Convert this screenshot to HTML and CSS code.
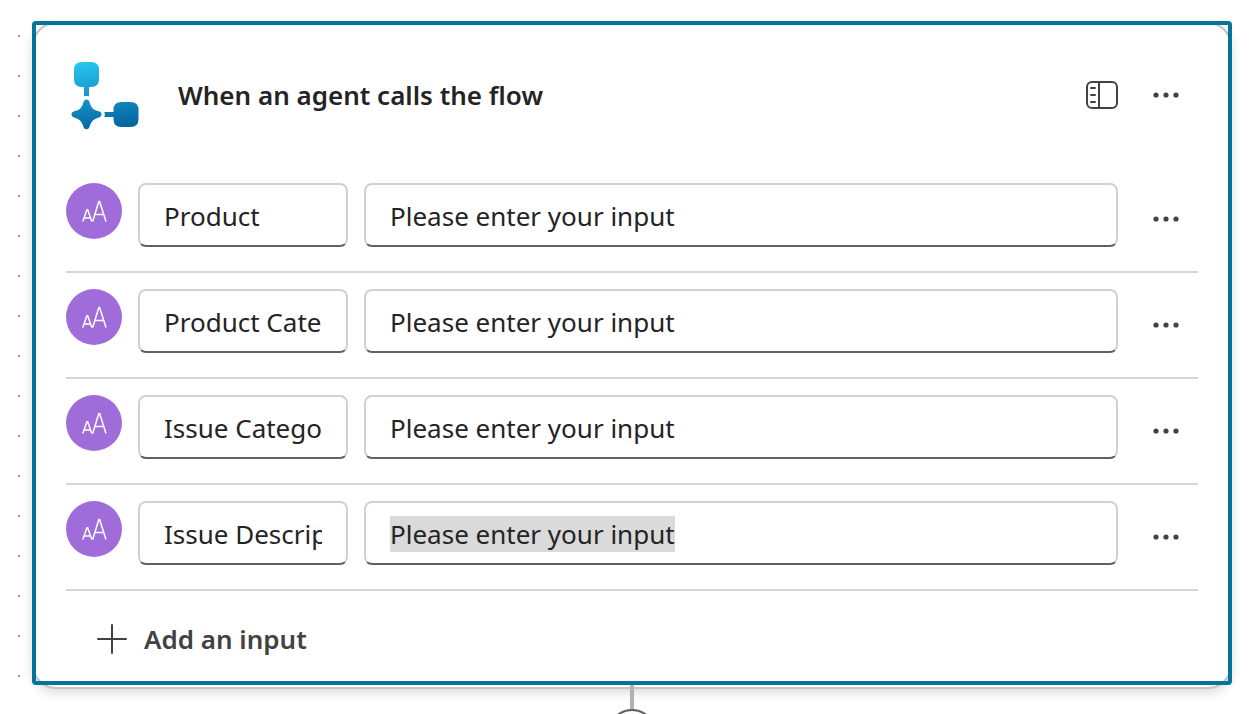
FILE: index.html
```html
<!DOCTYPE html>
<html lang="en">
<head>
<meta charset="utf-8">
<meta name="viewport" content="width=device-width, initial-scale=1">
<title>When an agent calls the flow</title>
<link rel="stylesheet" href="styles.css">
</head>
<body>
<svg class="sprite" aria-hidden="true">
  <symbol id="icon-text" viewBox="0 0 56 56">
    <path d="M26.700 38.500 32.800 18.500h.8L40 38.500M29 31.500h8.800M16.800 38.500 20.900 26.800h.8L25.800 38.500M18.200 35h6.400" fill="none" stroke="#fff" stroke-width="1.500" stroke-linejoin="round"/>
  </symbol>
  <symbol id="icon-more" viewBox="0 0 28 8">
    <circle cx="4" cy="4" r="2.600"/><circle cx="14" cy="4" r="2.600"/><circle cx="24" cy="4" r="2.600"/>
  </symbol>
</svg>
<main class="canvas">
  <section class="card">
    <header class="card-header">
      <svg class="flow-icon" viewBox="0 0 72 72" aria-hidden="true">
        <defs>
          <linearGradient id="flow" gradientUnits="userSpaceOnUse" x1="28" y1="2" x2="40" y2="70">
            <stop offset="0" stop-color="#27c3ee"/><stop offset="1" stop-color="#0364a0"/>
          </linearGradient>
        </defs>
        <g fill="url(#flow)">
          <path d="M12 3H21Q29 3 29 11V20Q29 28 21 28H19V37.300Q16.500 36.500 14 37.300V28H12Q4 28 4 20V11Q4 3 12 3Z"/>
          <path d="M16.500 40.500C18.300 40.500 19 41.800 19.600 43.500C21.500 49.500 23.500 51 28.800 52.300C30.500 52.900 31.500 53.700 31.500 55.300C31.500 57 30.500 57.900 28.800 58.400C23.500 60 21.500 62 19.600 67.500C19 69.300 18.300 70.300 16.500 70.300C14.700 70.300 14 69.300 13.400 67.500C11.500 62 9.500 60 4.200 58.400C2.500 57.900 1.500 57 1.500 55.300C1.500 53.700 2.500 52.900 4.200 52.300C9.500 51 11.500 49.500 13.400 43.500C14 41.800 14.700 40.500 16.500 40.500Z"/>
          <path d="M34.400 53H43.500V51Q43.500 43 51.500 43H60.500Q68.500 43 68.500 51V60Q68.500 68 60.500 68H51.500Q43.500 68 43.500 60V58H34.400Q35.200 55.500 34.400 53Z"/>
        </g>
      </svg>
      <h1 class="card-title">When an agent calls the flow</h1>
      <button class="icon-button" type="button" aria-label="Open panel">
        <svg class="panel-icon" viewBox="0 0 32 28" fill="none" stroke="currentColor" stroke-width="2" aria-hidden="true">
          <rect x="1" y="1" width="30" height="26" rx="5"/><path d="M13 1v26"/><path d="M5 7h4M5 14h4M5 21h4" stroke-linecap="round"/>
        </svg>
      </button>
      <button class="icon-button" type="button" aria-label="More actions"><svg class="more-icon" aria-hidden="true"><use href="#icon-more"/></svg></button>
    </header>
    <ul class="inputs">
      <li class="input-row">
        <svg class="type-badge" aria-hidden="true"><use href="#icon-text"/></svg>
        <input class="field" type="text" aria-label="Input 1 name" value="Product">
        <input class="field" type="text" aria-label="Input 1 description" value="Please enter your input">
        <button class="icon-button" type="button" aria-label="Input 1 menu"><svg class="more-icon" aria-hidden="true"><use href="#icon-more"/></svg></button>
      </li>
      <li class="input-row">
        <svg class="type-badge" aria-hidden="true"><use href="#icon-text"/></svg>
        <input class="field" type="text" aria-label="Input 2 name" value="Product Category">
        <input class="field" type="text" aria-label="Input 2 description" value="Please enter your input">
        <button class="icon-button" type="button" aria-label="Input 2 menu"><svg class="more-icon" aria-hidden="true"><use href="#icon-more"/></svg></button>
      </li>
      <li class="input-row">
        <svg class="type-badge" aria-hidden="true"><use href="#icon-text"/></svg>
        <input class="field" type="text" aria-label="Input 3 name" value="Issue Category">
        <input class="field" type="text" aria-label="Input 3 description" value="Please enter your input">
        <button class="icon-button" type="button" aria-label="Input 3 menu"><svg class="more-icon" aria-hidden="true"><use href="#icon-more"/></svg></button>
      </li>
      <li class="input-row">
        <svg class="type-badge" aria-hidden="true"><use href="#icon-text"/></svg>
        <input class="field" type="text" aria-label="Input 4 name" value="Issue Description">
        <input class="field" id="active-field" type="text" aria-label="Input 4 description" value="Please enter your input">
        <button class="icon-button" type="button" aria-label="Input 4 menu"><svg class="more-icon" aria-hidden="true"><use href="#icon-more"/></svg></button>
      </li>
    </ul>
    <footer class="card-footer">
      <button class="add-button" type="button">
        <svg class="plus-icon" viewBox="0 0 32 32" aria-hidden="true"><path d="M16 2v28M2 16h28" stroke="currentColor" stroke-width="2" stroke-linecap="round"/></svg>
        Add an input
      </button>
    </footer>
  </section>
  <div class="connector"></div>
  <div class="connector-node"></div>
</main>
<script src="script.js"></script>
</body>
</html>
```
FILE: styles.css
```css
* {
  box-sizing: border-box;
}

body {
  margin: 0;
  color: #242424;
  font-family: "Segoe UI", "Noto Sans", "Open Sans", sans-serif;
  font-size: 26px;
}

.sprite {
  position: absolute;
  width: 0;
  height: 0;
}

.canvas {
  display: flex;
  flex-direction: column;
  height: 100vh;
  overflow: hidden;
  padding: 22px 26px 0 32px;
  background-color: #fff;
  background-image: conic-gradient(from 90deg at 38px 38px, #999 90deg, transparent 0);
  background-size: 40px 40px;
  background-position: -20px -3px;
}

.card {
  position: relative;
  flex: none;
  padding: 0 32px;
  border: 2px solid #c4c4c4;
  border-radius: 24px;
  background: #fff;
  box-shadow: 0 4px 12px rgba(0, 0, 0, 0.14);
}

/* Selection frame */
.card::after {
  content: "";
  position: absolute;
  inset: -3px -2px 2px;
  border: 4px solid #04749c;
  border-radius: 4px;
  pointer-events: none;
}

.card-header {
  display: flex;
  align-items: center;
  height: 141px;
  margin-bottom: 2px;
}

.flow-icon {
  width: 72px;
  height: 72px;
  margin: 0 36px 0 4px;
}

.card-title {
  flex: 1;
  margin: 0;
  font-size: 26px;
  font-weight: 600;
  line-height: 40px;
}

.icon-button {
  display: flex;
  align-items: center;
  justify-content: center;
  width: 64px;
  height: 56px;
  padding: 0;
  border: 0;
  background: none;
  color: #424242;
}

.panel-icon {
  width: 32px;
  height: 28px;
}

.more-icon {
  width: 28px;
  height: 8px;
  fill: currentColor;
}

.inputs {
  margin: 0;
  padding: 0;
  list-style: none;
}

.input-row {
  display: grid;
  grid-template-columns: 56px 210px 1fr 64px;
  gap: 16px;
  padding: 16px 0 24px;
  border-bottom: 2px solid #d6d6d6;
}

.input-row .icon-button {
  align-self: end;
}

.type-badge {
  width: 56px;
  height: 56px;
  border-radius: 50%;
  background: #a06cd9;
}

.field {
  width: 100%;
  min-width: 0;
  height: 64px;
  padding: 2px 24px 0;
  border: 2px solid #d1d1d1;
  border-bottom-color: #616161;
  border-radius: 8px;
  outline: 0;
  background: #fff;
  color: inherit;
  font: inherit;
  line-height: 40px;
}

.field::selection {
  background: #dadada;
  color: #242424;
}

.card-footer {
  display: flex;
  align-items: center;
  height: 96px;
  padding-left: 30px;
}

.add-button {
  display: flex;
  align-items: center;
  gap: 16px;
  padding: 0;
  border: 0;
  background: none;
  color: #424242;
  font: inherit;
  font-weight: 600;
  line-height: 40px;
}

.plus-icon {
  width: 32px;
  height: 32px;
}

.connector {
  z-index: 1;
  flex: none;
  align-self: center;
  width: 4px;
  height: 24px;
  margin-top: -4px;
  background: #b1b1b7;
}

.connector-node {
  z-index: 1;
  flex: none;
  align-self: center;
  width: 48px;
  height: 48px;
  border: 2px solid #616161;
  border-radius: 50%;
  background: #fff;
}
```
FILE: script.js
```js
const field = document.getElementById("active-field");
field.focus();
field.select();
```
